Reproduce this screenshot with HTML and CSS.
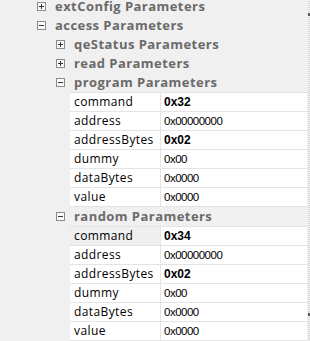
FILE: index.html
```html
<!DOCTYPE html>
<html>
    <head>
        <meta charset="UTF-8">
        <title>Parameters</title>
        <link rel="stylesheet" href="styles.css">
    </head>
    <body>
        <div class="page">
            <div class="tree">
                <div class="head lvl0 first">
                    <svg class="box" width="9" height="9" viewBox="0 0 9 9"><rect x="0.5" y="0.5" width="8" height="8" fill="#fafafa" stroke="#8c8c8c"/><path d="M2 4.5h5M4.5 2v5" stroke="#333"/></svg>
                    <span>extConfig Parameters</span>
                </div>
                <div class="head lvl0">
                    <svg class="box" width="9" height="9" viewBox="0 0 9 9"><rect x="0.5" y="0.5" width="8" height="8" fill="#fafafa" stroke="#8c8c8c"/><path d="M2 4.5h5" stroke="#333"/></svg>
                    <span>access Parameters</span>
                </div>
                <div class="head lvl1">
                    <svg class="box" width="9" height="9" viewBox="0 0 9 9"><rect x="0.5" y="0.5" width="8" height="8" fill="#fafafa" stroke="#8c8c8c"/><path d="M2 4.5h5M4.5 2v5" stroke="#333"/></svg>
                    <span>qeStatus Parameters</span>
                </div>
                <div class="head lvl1">
                    <svg class="box" width="9" height="9" viewBox="0 0 9 9"><rect x="0.5" y="0.5" width="8" height="8" fill="#fafafa" stroke="#8c8c8c"/><path d="M2 4.5h5M4.5 2v5" stroke="#333"/></svg>
                    <span>read Parameters</span>
                </div>
                <div class="head lvl1">
                    <svg class="box" width="9" height="9" viewBox="0 0 9 9"><rect x="0.5" y="0.5" width="8" height="8" fill="#fafafa" stroke="#8c8c8c"/><path d="M2 4.5h5" stroke="#333"/></svg>
                    <span>program Parameters</span>
                </div>
                <div class="props">
                    <div class="row"><div class="name">command</div><div class="val bold">0x32</div></div>
                    <div class="row"><div class="name">address</div><div class="val">0x00000000</div></div>
                    <div class="row"><div class="name">addressBytes</div><div class="val bold">0x02</div></div>
                    <div class="row"><div class="name">dummy</div><div class="val">0x00</div></div>
                    <div class="row"><div class="name">dataBytes</div><div class="val">0x0000</div></div>
                    <div class="row"><div class="name">value</div><div class="val">0x0000</div></div>
                </div>
                <div class="head lvl1">
                    <svg class="box" width="9" height="9" viewBox="0 0 9 9"><rect x="0.5" y="0.5" width="8" height="8" fill="#fafafa" stroke="#8c8c8c"/><path d="M2 4.5h5" stroke="#333"/></svg>
                    <span>random Parameters</span>
                </div>
                <div class="props">
                    <div class="row"><div class="name sel">command</div><div class="val bold">0x34</div></div>
                    <div class="row"><div class="name">address</div><div class="val">0x00000000</div></div>
                    <div class="row"><div class="name">addressBytes</div><div class="val bold">0x02</div></div>
                    <div class="row"><div class="name">dummy</div><div class="val">0x00</div></div>
                    <div class="row"><div class="name">dataBytes</div><div class="val">0x0000</div></div>
                    <div class="row"><div class="name">value</div><div class="val">0x0000</div></div>
                </div>
            </div>
            <div class="splitter">
                <div class="mark top"></div>
                <div class="mark bottom"></div>
            </div>
        </div>
    </body>
</html>
```

FILE: styles.css
```css
html,body{
    margin: 0;
    padding: 0;
    background: #f0f0f0;
    font-family: 'Open Sans', 'Noto Sans', sans-serif;
    font-size: 12px;
    overflow: hidden;
}
.page{
    display: flex;
    width: 310px;
    height: 341px;
}
.tree{
    width: 308px;
}
.head{
    display: flex;
    align-items: center;
    height: 19px;
    font-size: 13px;
    line-height: 13px;
    font-weight: bold;
    letter-spacing: 0.45px;
    color: #6a6a6a;
    white-space: nowrap;
}
.head.first{
    height: 13px;
    padding-bottom: 3px;
}
.lvl0{
    padding-left: 37px;
}
.lvl1{
    padding-left: 56px;
}
.box{
    flex: none;
    margin-right: 9px;
}
.props{
    margin-left: 70px;
    width: 237px;
    border-top: 1px solid #e4e4e4;
}
.row{
    display: flex;
    height: 18px;
    border-bottom: 1px solid #e4e4e4;
}
.name{
    width: 86px;
    padding-left: 4px;
    background: #fff;
    border-right: 1px solid #e4e4e4;
    color: #000;
    line-height: 18px;
    letter-spacing: 0.4px;
}
.name.sel{
    background: #efefef;
}
.val{
    flex: 1;
    padding-left: 3px;
    background: #fff;
    color: #000;
    line-height: 18px;
    font-family: 'Liberation Sans', Arial, sans-serif;
    font-size: 11.5px;
    letter-spacing: -0.5px;
}
.val.bold{
    font-weight: bold;
    font-size: 12px;
    letter-spacing: 0;
}
.splitter{
    position: relative;
    width: 2px;
    background-image: repeating-linear-gradient(#f0f0f0 0 1px, #d8d8d8 1px 2px);
}
.mark{
    position: absolute;
    left: 0;
    width: 2px;
    height: 3px;
    background: #555;
}
.mark.top{
    top: 13px;
}
.mark.bottom{
    top: 313px;
}
```
